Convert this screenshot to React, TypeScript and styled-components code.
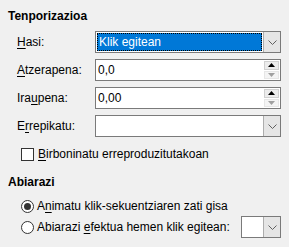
import styled, { createGlobalStyle } from 'styled-components';

const GlobalStyle = createGlobalStyle`
  html, body {
    margin: 0;
    padding: 0;
    background: #f0f0f0;
  }
  body {
    font-family: "Liberation Sans", Arial, sans-serif;
    font-size: 12px;
    color: #000;
  }
`;

const Page = styled.div`
  width: 289px;
  height: 247px;
  box-sizing: border-box;
  padding: 8px 8px 0 8px;
  background: #f0f0f0;
  display: flex;
  flex-direction: column;
`;

const SectionTitle = styled.div<{ $top?: number }>`
  font-weight: 700;
  line-height: 16px;
  height: 16px;
  margin-top: ${p => p.$top ?? 0}px;
`;

const FieldGrid = styled.div`
  display: grid;
  grid-template-columns: 78px 1fr;
  grid-auto-rows: 22px;
  row-gap: 6px;
  padding-left: 9px;
  margin-top: 7px;
`;

const Label = styled.div`
  display: flex;
  align-items: center;
`;

const Key = styled.span`
  text-decoration: underline;
  text-underline-offset: 2px;
`;

const Combo = styled.div`
  display: flex;
  box-sizing: border-box;
  height: 22px;
  border: 1px solid #7a7a7a;
  background: #fff;
`;

const ComboValue = styled.div<{ $focused?: boolean }>`
  flex: 1;
  display: flex;
  align-items: center;
  box-sizing: border-box;
  padding-left: 2px;
  ${p =>
    p.$focused &&
    `
    background: #0078d7;
    color: #fff;
    border: 1px dotted #000;
    margin: 1px;
    padding-left: 1px;
  `}
`;

const DropButton = styled.div`
  width: 17px;
  box-sizing: border-box;
  border-left: 1px solid #adadad;
  background: #e5e5e5;
  display: flex;
  align-items: center;
  justify-content: center;
`;

const Spin = styled.div`
  display: flex;
  box-sizing: border-box;
  height: 22px;
  border: 1px solid #7a7a7a;
  background: #fff;
`;

const SpinValue = styled.div`
  flex: 1;
  display: flex;
  align-items: center;
  padding-left: 2px;
`;

const SpinButtons = styled.div`
  width: 15px;
  display: flex;
  flex-direction: column;
  padding: 1px 1px 1px 0;
  gap: 1px;
`;

const SpinHalf = styled.div<{ $disabled?: boolean }>`
  flex: 1;
  box-sizing: border-box;
  border: 1px solid ${p => (p.$disabled ? '#e6e6e6' : '#d0d0d0')};
  background: ${p => (p.$disabled ? '#f4f4f4' : '#ececec')};
  display: flex;
  align-items: center;
  justify-content: center;
`;

const CheckRow = styled.div`
  display: flex;
  align-items: center;
  gap: 4px;
  height: 16px;
  padding-left: 13px;
  margin-top: 9px;
`;

const CheckBox = styled.div`
  width: 13px;
  height: 13px;
  box-sizing: border-box;
  border: 1px solid #333;
  background: #fff;
`;

const RadioRow = styled.div<{ $top: number; $h?: number }>`
  display: flex;
  align-items: center;
  gap: 3px;
  height: ${p => p.$h ?? 16}px;
  padding-left: 13px;
  margin-top: ${p => p.$top}px;
`;

const Radio = styled.div<{ $checked?: boolean }>`
  width: 13px;
  height: 13px;
  box-sizing: border-box;
  border: 1px solid #333;
  border-radius: 50%;
  background: #fff;
  display: flex;
  align-items: center;
  justify-content: center;
  &::after {
    content: '';
    display: ${p => (p.$checked ? 'block' : 'none')};
    width: 7px;
    height: 7px;
    border-radius: 50%;
    background: #333;
  }
`;

const SmallCombo = styled(Combo)`
  width: 40px;
  margin-left: auto;
  margin-right: 0;
`;

const Chevron = () => (
  <svg width="9" height="5" viewBox="0 0 9 5">
    <path d="M0.5 0.5 L4.5 4.5 L8.5 0.5" fill="none" stroke="#606060" strokeWidth="1" />
  </svg>
);

const Arrow = ({ up, color }: { up?: boolean; color: string }) => (
  <svg width="7" height="4" viewBox="0 0 7 4">
    <path d={up ? 'M0 4 L3.5 0 L7 4 Z' : 'M0 0 L3.5 4 L7 0 Z'} fill={color} />
  </svg>
);

export default function App() {
  return (
    <>
      <GlobalStyle />
      <Page>
        <SectionTitle>Tenporizazioa</SectionTitle>
        <FieldGrid>
          <Label><Key>H</Key>asi:</Label>
          <Combo>
            <ComboValue $focused>Klik egitean</ComboValue>
            <DropButton><Chevron /></DropButton>
          </Combo>

          <Label><Key>A</Key>tzerapena:</Label>
          <Spin>
            <SpinValue>0,0</SpinValue>
            <SpinButtons>
              <SpinHalf><Arrow up color="#000" /></SpinHalf>
              <SpinHalf $disabled><Arrow color="#a0a0a0" /></SpinHalf>
            </SpinButtons>
          </Spin>

          <Label>Ira<Key>u</Key>pena:</Label>
          <Spin>
            <SpinValue>0,00</SpinValue>
            <SpinButtons>
              <SpinHalf><Arrow up color="#000" /></SpinHalf>
              <SpinHalf $disabled><Arrow color="#a0a0a0" /></SpinHalf>
            </SpinButtons>
          </Spin>

          <Label>E<Key>r</Key>repikatu:</Label>
          <Combo>
            <ComboValue />
            <DropButton><Chevron /></DropButton>
          </Combo>
        </FieldGrid>

        <CheckRow>
          <CheckBox />
          <span><Key>B</Key>irboninatu erreproduzitutakoan</span>
        </CheckRow>

        <SectionTitle $top={12}>Abiarazi</SectionTitle>

        <RadioRow $top={8}>
          <Radio $checked />
          <span>A<Key>n</Key>imatu klik-sekuentziaren zati gisa</span>
        </RadioRow>
        <RadioRow $top={2} $h={22}>
          <Radio />
          <span>Abiarazi <Key>e</Key>fektua hemen klik egitean:</span>
          <SmallCombo>
            <ComboValue />
            <DropButton><Chevron /></DropButton>
          </SmallCombo>
        </RadioRow>
      </Page>
    </>
  );
}
